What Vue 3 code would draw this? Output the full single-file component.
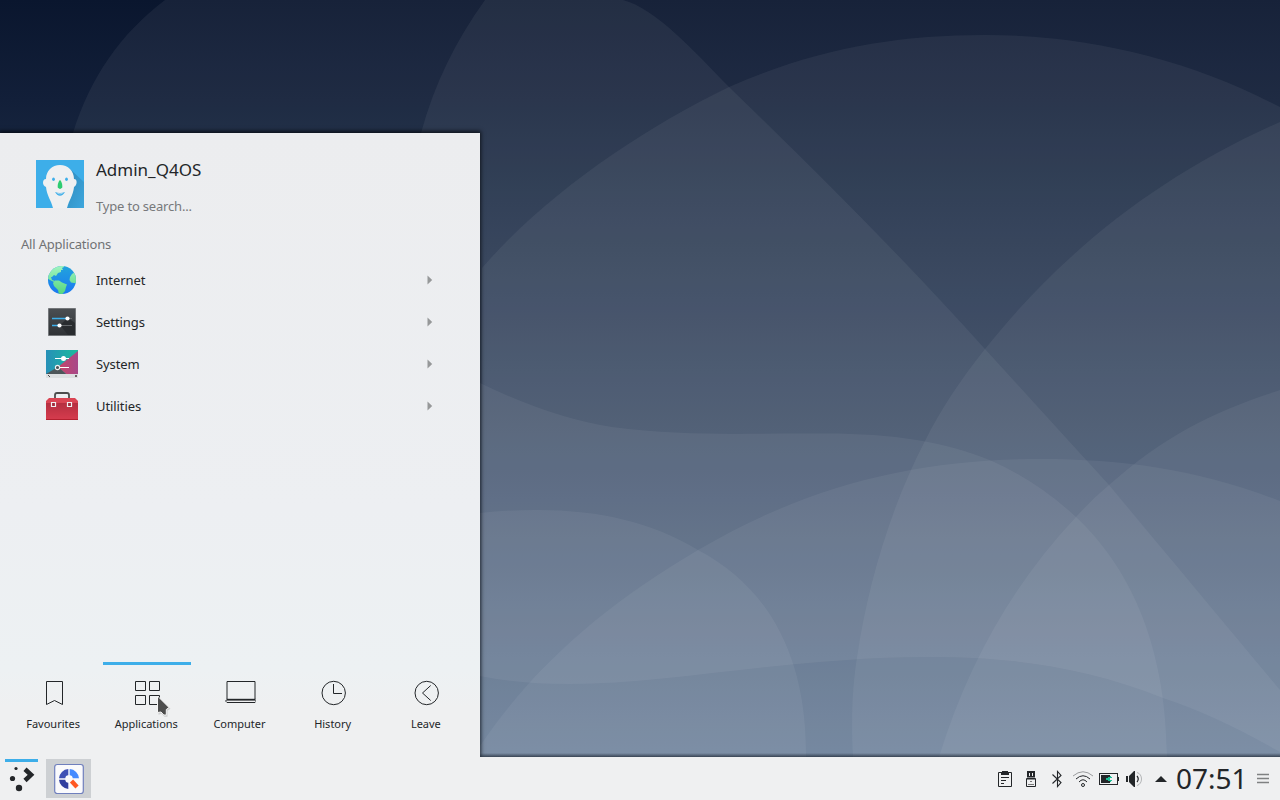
<script setup>
import { ref } from 'vue'

const categories = [
  { id: 'internet', label: 'Internet' },
  { id: 'settings', label: 'Settings' },
  { id: 'system', label: 'System' },
  { id: 'utilities', label: 'Utilities' },
]

const tabs = [
  { id: 'favourites', label: 'Favourites' },
  { id: 'applications', label: 'Applications' },
  { id: 'computer', label: 'Computer' },
  { id: 'history', label: 'History' },
  { id: 'leave', label: 'Leave' },
]

const activeTab = ref('applications')
</script>

<template>
  <div class="desktop">
    <svg class="wallpaper" viewBox="0 0 1280 800" width="1280" height="800" aria-hidden="true">
      <defs>
        <linearGradient id="sky" gradientUnits="userSpaceOnUse" x1="0" y1="0" x2="0" y2="800">
          <stop offset="0" stop-color="rgb(10,22,46)" />
          <stop offset=".125" stop-color="rgb(18,31,57)" />
          <stop offset=".25" stop-color="rgb(28,44,69)" />
          <stop offset=".375" stop-color="rgb(38,54,81)" />
          <stop offset=".475" stop-color="rgb(47,64,90)" />
          <stop offset=".625" stop-color="rgb(58,77,106)" />
          <stop offset=".8125" stop-color="rgb(74,96,126)" />
          <stop offset="1" stop-color="rgb(90,114,144)" />
        </linearGradient>
      </defs>
      <rect width="1280" height="800" fill="url(#sky)" />
      <g fill="#fff" fill-opacity=".055">
        <path d="M73 133C90 78 120 34 165 0H1280V752Q1215 715 1163 698C1080 664 1000 657 930 657C790 657 670 684 570 684Q520 684 480 676H60Z" />
        <path d="M421 133C434 85 456 40 485 0H623C655 8 694 51 729 87C820 175 905 260 985 349L1109 485L1280 690V800H421Z" />
        <path d="M482 268C545 195 640 130 729 87C815 49 895 35 985 35C1090 35 1190 60 1280 107V800H482Z" />
        <path d="M1280 122C1155 177 1060 255 985 349C958 383 940 411 925 441C890 508 868 585 857 657C852 692 851 720 853 757V800H1280Z" />
        <path d="M480 383Q552 418 612 427C690 437 750 433 820 433.500C890 433 944 441 992 461Q1037 481 1076 517C1127 565 1166 640 1167 757V800H480Z" />
        <path d="M480 746C535 664 608 603 698 550C810 484 920 459 1041 459C1125 459 1200 470 1280 501V800H480Z" />
        <path d="M480 513Q505 510 537 510C602 510 653 523 698 550C765 585 807 652 806 757V800H480Z" />
        <path d="M939 757Q982 617 1076 517Q1092 499 1109 485C1165 435 1215 411 1280 390V800H926Z" />
      </g>
    </svg>

    <section class="launcher">
      <header class="user">
        <svg class="avatar" width="48" height="48" viewBox="0 0 48 48" aria-hidden="true">
          <defs>
            <linearGradient id="shade" x1="0" y1="0" x2="1" y2="1">
              <stop offset="0" stop-color="#2f8bbd" />
              <stop offset="1" stop-color="#3da6dd" />
            </linearGradient>
          </defs>
          <rect width="48" height="48" fill="#3daee9" />
          <path d="M35 10L48 22V48H31L38 28Z" fill="url(#shade)" />
          <path d="M24 5C32 5 38 11 38 19C42 19 41 26 38 27C37 36 33 40 31 48H17C15 40 11 36 10 27C6 26 6 19 10 19C10 11 16 5 24 5Z" fill="#eff0f1" />
          <ellipse cx="17.500" cy="19.300" rx="1.400" ry="1.800" fill="#3daee9" />
          <ellipse cx="30.500" cy="19.300" rx="1.400" ry="1.800" fill="#3daee9" />
          <path d="M24 20C25.500 21 26.700 25 26.200 27.500Q24 30.400 21.800 27.500C21.300 25 22.500 21 24 20Z" fill="#2ecc71" />
          <path d="M19 32Q24 34 29 32Q27 35.700 24 35.700Q21 35.700 19 32Z" fill="#3daee9" />
          <path d="M21.500 33.400Q24 34.400 26.500 33.400" fill="none" stroke="#eff0f1" stroke-width=".6" />
        </svg>
        <div class="identity">
          <h1 class="name">Admin_Q4OS</h1>
          <p class="search">Type to search...</p>
        </div>
      </header>

      <h2 class="heading">All Applications</h2>
      <ul class="categories">
        <li v-for="item in categories" :key="item.id" class="category">
          <svg v-if="item.id === 'internet'" class="app-icon" viewBox="0 0 32 32" aria-hidden="true">
            <defs>
              <linearGradient id="sea" x1="0" y1="0" x2="0" y2="1">
                <stop offset="0" stop-color="#22a4dc" />
                <stop offset="1" stop-color="#1a78f2" />
              </linearGradient>
              <linearGradient id="land" gradientUnits="userSpaceOnUse" x1="0" y1="2" x2="0" y2="30">
                <stop offset="0" stop-color="#a0f4c0" />
                <stop offset="1" stop-color="#55d67f" />
              </linearGradient>
              <clipPath id="globe"><circle cx="16" cy="16" r="14" /></clipPath>
            </defs>
            <circle cx="16" cy="16" r="14" fill="url(#sea)" />
            <g clip-path="url(#globe)" fill="url(#land)">
              <path d="M1 14V8L10 1H18V3L16 4L17 6L15 6L15 8L12 9L10 12L8 11L6 13L5 13L6 16L9 17L8 18L4 16Z" />
              <path d="M9 16.500L13 16.500L16 18.500L21 20.500L20 23L19 27L16 30.500H13L12 26L8 22L7 19Z" />
              <path d="M29 8L26 10L24 13L23.500 16L25 18.500L28 19H32V9Z" />
            </g>
          </svg>
          <svg v-else-if="item.id === 'settings'" class="app-icon" viewBox="0 0 32 32" aria-hidden="true">
            <defs>
              <linearGradient id="slate" x1="0" y1="0" x2="0" y2="1">
                <stop offset="0" stop-color="#4a4e52" />
                <stop offset="1" stop-color="#303336" />
              </linearGradient>
            </defs>
            <rect x="2" y="2" width="28" height="28" rx=".7" fill="#74777a" />
            <rect x="3" y="3" width="26" height="26" fill="url(#slate)" />
            <path d="M14 19L22 12L29 17V29H22Z" fill="#292c2f" />
            <path d="M6 12.500H21M6 19.500H13" stroke="#3daee9" stroke-width="1.300" />
            <path d="M21 12.500H26M14 19.500H26" stroke="#64686b" stroke-width="1" />
            <circle cx="21.500" cy="12.500" r="2.100" fill="#fff" />
            <circle cx="13.500" cy="19.500" r="2.100" fill="#fff" />
          </svg>
          <svg v-else-if="item.id === 'system'" class="app-icon" viewBox="0 0 32 32" aria-hidden="true">
            <defs>
              <linearGradient id="teal" x1="0" y1="0" x2="1" y2="0">
                <stop offset="0" stop-color="#2790b8" />
                <stop offset="1" stop-color="#1abc9c" />
              </linearGradient>
              <linearGradient id="rose" x1="0" y1="0" x2="1" y2="0">
                <stop offset="0" stop-color="#c64567" />
                <stop offset="1" stop-color="#a74889" />
              </linearGradient>
            </defs>
            <rect y="2" width="32" height="24" fill="url(#teal)" />
            <path d="M32 3V26H20L12 19Z" fill="url(#rose)" />
            <path d="M0 26L12 19L20 26Z" fill="#4d5659" />
            <rect y="26" width="32" height="4" fill="#dcdfe1" />
            <path d="M2 27L4 29" stroke="#4d4d4d" />
            <rect x="29" y="27" width="2" height="2" fill="#6d6266" />
            <path d="M9 10.500H23M13 19.500H23" stroke="#fff" stroke-width="1.200" />
            <circle cx="17.500" cy="10.500" r="2.500" fill="#fff" />
            <circle cx="11.500" cy="19.500" r="2.100" fill="#4d5659" stroke="#eff0f1" stroke-width="1.100" />
          </svg>
          <svg v-else class="app-icon" viewBox="0 0 32 32" aria-hidden="true">
            <defs>
              <linearGradient id="crimson" x1="0" y1="0" x2="0" y2="1">
                <stop offset="0" stop-color="#b52f40" />
                <stop offset="1" stop-color="#d73c4e" />
              </linearGradient>
            </defs>
            <path d="M9 9V5Q9 3 11 3H21Q23 3 23 5V9" fill="none" stroke="#4d4d4d" stroke-width="1.800" />
            <path d="M0 13V11L3 8H29L32 11V13Z" fill="#da4453" />
            <rect y="13" width="32" height="17" fill="url(#crimson)" />
            <path d="M0 29.500H32" stroke="#b3202f" />
            <path d="M5.500 12.500H9.500V16.500H5.500ZM21.500 12.500H25.500V16.500H21.500Z" fill="#a52b3a" stroke="#eff0f1" stroke-width="1.200" />
          </svg>
          <span class="label">{{ item.label }}</span>
          <svg class="arrow" width="6" height="10" viewBox="0 0 6 10" aria-hidden="true">
            <path d="M.5 .5L5.200 5L.5 9.500Z" fill="#969899" />
          </svg>
        </li>
      </ul>

      <nav class="tabs">
        <button v-for="tab in tabs" :key="tab.id" class="tab" :class="{ active: activeTab === tab.id }" @click="activeTab = tab.id">
          <svg class="tab-icon" width="32" height="32" viewBox="0 0 32 32" aria-hidden="true">
            <path v-if="tab.id === 'favourites'" d="M8.500 4.500H24.500V27.500L16.500 23.500L8.500 27.500Z" />
            <path v-else-if="tab.id === 'applications'" d="M4.500 4.500H14.500V13.500H4.500ZM18.500 4.500H28.500V13.500H18.500ZM4.500 18.500H14.500V27.500H4.500ZM18.500 18.500H28.500V27.500H18.500Z" />
            <g v-else-if="tab.id === 'computer'">
              <path d="M3 22V4.500H31V22" />
              <path d="M2.500 22.700H31.500" stroke-width="1.800" />
              <path d="M2 23V24.500L3 25.500H31L32 24.500V23" />
            </g>
            <g v-else-if="tab.id === 'history'">
              <circle cx="16.700" cy="16" r="11.700" />
              <path d="M16.500 7V16.500H25" />
            </g>
            <g v-else>
              <circle cx="16.700" cy="16" r="11.700" />
              <path d="M20.700 8.500L12.500 16L20.700 23.500" />
            </g>
          </svg>
          <span>{{ tab.label }}</span>
        </button>
      </nav>
    </section>

    <footer class="panel">
      <button class="start" aria-label="Application launcher">
        <svg width="33" height="41" viewBox="0 0 33 41" aria-hidden="true">
          <path d="M20 10.300L26 15.800L20 21.500" fill="none" stroke="#232629" stroke-width="4.600" />
          <circle cx="11" cy="9.500" r="1.600" fill="#232629" />
          <circle cx="7.500" cy="19.500" r="2.600" fill="#232629" />
          <circle cx="14" cy="29" r="3.200" fill="#232629" />
        </svg>
      </button>
      <button class="task" aria-label="Q4OS welcome">
        <svg width="32" height="32" viewBox="0 0 32 32" aria-hidden="true">
          <rect x="1.700" y="1.500" width="28.600" height="29" rx="2.500" fill="#fafafc" stroke="#6f7fbd" stroke-width="1.200" />
          <path d="M15.300 6A10 10 0 0 0 6 15.300H12.300Q12.500 12.500 15.300 12.300Z" fill="#3f51b5" />
          <path d="M16.700 6A10 10 0 0 1 26 15.300H19.700Q19.500 12.500 16.700 12.300Z" fill="#448aff" />
          <path d="M6 16.700A10 10 0 0 0 15.300 26V19.700Q12.500 19.500 12.300 16.700Z" fill="#303f9f" />
          <path d="M18.500 18L24 24" stroke="#ff5722" stroke-width="4.400" />
        </svg>
      </button>
      <div class="tray">
        <svg class="tray-icon" viewBox="0 0 22 22" aria-hidden="true">
          <path d="M4.500 4.500H17.500V18.500H4.500Z" fill="none" stroke="#232629" />
          <path d="M7 4H8V3H14V4H15V7H7Z" fill="#232629" />
          <path d="M7 9.500H15M7 12.500H12M7 15.500H10" stroke="#232629" />
        </svg>
        <svg class="tray-icon" viewBox="0 0 22 22" aria-hidden="true">
          <path d="M7 3H15V9H7Z" fill="#232629" />
          <path d="M9 5H10V8H9ZM12 5H13V8H12Z" fill="#eff0f1" />
          <path d="M6.500 10.500H15.500V18.500H6.500Z" fill="none" stroke="#232629" />
          <path d="M7 10.500H15" stroke="#232629" stroke-width="2" />
          <path d="M10 13.500H12M8 16.500H14" stroke="#777" />
        </svg>
        <svg class="tray-icon" viewBox="0 0 22 22" aria-hidden="true">
          <path d="M6.500 6.500L15 14.500L11.500 18.500V3.500L15 7.500L6.500 15.500" fill="none" stroke="#232629" stroke-width="1.100" />
        </svg>
        <svg class="tray-icon" viewBox="0 0 22 22" aria-hidden="true">
          <g fill="none" stroke="#232629">
            <path d="M1 8Q11 -.5 21 8" stroke="#9a9c9e" />
            <path d="M4 11Q11 4.500 18 11" />
            <path d="M7 14Q11 9.500 15 14" />
            <circle cx="11" cy="17" r="1.500" />
          </g>
        </svg>
        <svg class="tray-icon" viewBox="0 0 22 22" aria-hidden="true">
          <rect x="1.500" y="5.500" width="18" height="11" fill="none" stroke="#232629" />
          <path d="M3 7H12V15H3ZM20 9H21V13H20Z" fill="#232629" />
          <path d="M8 10H10V9H12V8H13V9H14V10H12V12H14V13H13V14H12V13H10V12H8Z" fill="#1fbf97" />
        </svg>
        <svg class="tray-icon" viewBox="0 0 22 22" aria-hidden="true">
          <path d="M2 8H4V14H2ZM5 8L10 3H11V19H10L5 14Z" fill="#232629" />
          <path d="M13 8Q15.500 11 13 14" fill="none" stroke="#232629" stroke-width="1.200" />
          <path d="M13 4.500C19 6 19 16 13 17.500" fill="none" stroke="#b4b6b8" />
        </svg>
        <svg class="tray-icon" viewBox="0 0 22 22" aria-hidden="true">
          <path d="M5 14L11 8L17 14Z" fill="#232629" />
        </svg>
      </div>
      <time class="clock">07:51</time>
      <svg class="grip" width="12" height="11" viewBox="0 0 12 11" aria-hidden="true">
        <path d="M0 1.500H12M0 5.500H12M0 9.500H12" stroke="#7f8182" stroke-width="1.400" />
      </svg>
    </footer>

    <svg class="pointer" width="20" height="24" viewBox="0 0 20 24" aria-hidden="true">
      <path d="M2 2L14 13L11 15V21H8L5 18L2 19Z" transform="translate(.5 .8)" fill="#000" fill-opacity=".14" />
      <path d="M1.500 1L13 12.500L10.300 14.500V20H7.800L5 17L1.500 17.500Z" fill="#4d4d4d" stroke="#f7f7f7" stroke-width="1" />
    </svg>
  </div>
</template>

<style>
body {
  margin: 0;
  overflow: hidden;
}
</style>

<style scoped>
.desktop {
  position: relative;
  display: flex;
  flex-direction: column;
  justify-content: flex-end;
  align-items: flex-start;
  width: 1280px;
  height: 800px;
  overflow: hidden;
  font-family: "Noto Sans", sans-serif;
  color: #232629;
}

.wallpaper {
  position: absolute;
  inset: 0;
}

button {
  margin: 0;
  padding: 0;
  border: 0;
  background: none;
  font: inherit;
  color: inherit;
}

h1,
h2,
p,
ul {
  margin: 0;
  padding: 0;
  font-weight: 400;
  list-style: none;
}

.launcher {
  position: relative;
  z-index: 1;
  display: flex;
  flex-direction: column;
  box-sizing: border-box;
  width: 480px;
  height: 624px;
  background: linear-gradient(#ecedef, #edeff2 60%, #edf1f3 86%, #eff0f1 92%);
  box-shadow: 0 -1px 4px 1px rgba(0, 0, 0, .65);
}

.user {
  display: flex;
  gap: 12px;
  padding: 27px 36px 0;
}

.identity {
  display: flex;
  flex-direction: column;
}

.name {
  font-size: 17px;
  line-height: 20px;
}

.search {
  margin-top: 17px;
  font-size: 13px;
  line-height: 18px;
  letter-spacing: -.18px;
  color: #77797b;
}

.heading {
  margin: 20px 0 0 21px;
  font-size: 13px;
  line-height: 18px;
  letter-spacing: -.19px;
  color: #707274;
}

.categories {
  margin-top: 6px;
}

.category {
  display: flex;
  align-items: center;
  height: 42px;
  padding: 0 47px 0 46px;
  font-size: 13px;
  letter-spacing: -.08px;
}

.app-icon {
  width: 32px;
  height: 32px;
}

.label {
  flex: 1;
  margin-left: 18px;
}

.tabs {
  display: grid;
  grid-template-columns: repeat(5, 93.2px);
  margin-top: auto;
  padding: 0 7px;
  height: 95px;
}

.tab {
  display: flex;
  flex-direction: column;
  align-items: center;
  margin: 0 2.600px;
  border-top: 3px solid transparent;
  padding-top: 12px;
  font-size: 11px;
  line-height: 16px;
}

.tab span {
  margin-left: -1px;
}

.tab.active {
  border-color: #3daee9;
}

.tab-icon {
  margin-bottom: 7px;
  fill: none;
  stroke: #232629;
}

.panel {
  position: relative;
  z-index: 2;
  display: flex;
  align-items: center;
  box-sizing: border-box;
  width: 1280px;
  height: 43px;
  padding: 0 11px 0 5px;
  background: #eff0f1;
}

/* Edge shadow falls only on the wallpaper beside the launcher */
.panel::before {
  content: "";
  position: absolute;
  left: 480px;
  right: 0;
  top: -4px;
  height: 4px;
  background: linear-gradient(rgba(20, 28, 40, 0), rgba(20, 28, 40, .65));
}

.start {
  height: 41px;
  margin-right: 8px;
  box-sizing: border-box;
  border-top: 3px solid #3daee9;
  align-self: flex-end;
}

.start svg {
  display: block;
  margin-top: -3px;
}

.task {
  display: flex;
  align-items: center;
  justify-content: center;
  align-self: flex-end;
  width: 45px;
  height: 39px;
  margin-bottom: 2px;
  background: #cdd0d3;
}

.tray {
  display: flex;
  gap: 4px;
  margin-left: auto;
}

.tray-icon {
  width: 22px;
  height: 22px;
}

.clock {
  margin: -2px 0 0 4px;
  width: 72px;
  font-size: 28px;
  line-height: 40px;
  white-space: nowrap;
}

.grip {
  margin-left: 9px;
}

.pointer {
  position: absolute;
  z-index: 3;
  left: 156px;
  top: 695px;
}
</style>
